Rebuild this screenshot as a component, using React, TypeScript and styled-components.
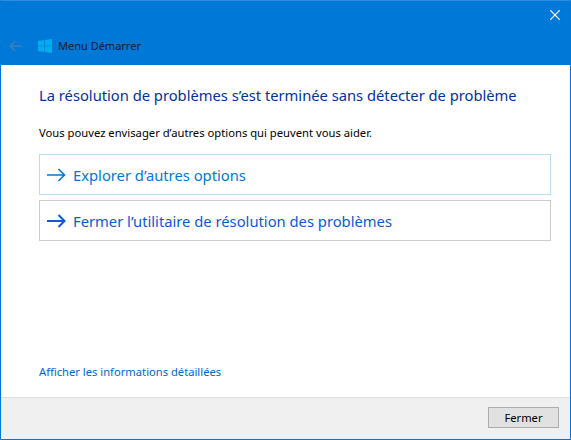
import React from "react";
import styled, { createGlobalStyle } from "styled-components";

const Global = createGlobalStyle`
  html, body { margin: 0; padding: 0; background: #fff; }
  #root { width: 571px; height: 440px; }
`;

const Win = styled.div`
  box-sizing: border-box;
  width: 571px;
  height: 440px;
  border: 1px solid #0078d7;
  border-top-color: #2b8ddb;
  display: flex;
  flex-direction: column;
  font-family: "Noto Sans", "Open Sans", sans-serif;
  overflow: hidden;
`;

const Header = styled.header`
  box-sizing: border-box;
  height: 64px;
  background: #0078d7;
  display: flex;
  flex-direction: column;
  flex: none;
`;

const CloseRow = styled.div`
  height: 36px;
  display: flex;
  justify-content: flex-end;
  align-items: flex-start;
  padding: 9px 10px 0 0;
  box-sizing: border-box;
  flex: none;
`;

const NavRow = styled.div`
  display: flex;
  align-items: center;
  height: 18px;
  padding: 0 0 0 8px;
`;

const BackIcon = styled.svg`
  margin-right: 15px;
  flex: none;
`;

const Title = styled.span`
  font-size: 11px;
  color: #0a1a33;
  margin-left: 6px;
  line-height: 18px;
`;

const Main = styled.main`
  flex: 1;
  background: #fff;
  display: flex;
  flex-direction: column;
  padding: 18px 19px 0 38px;
  min-height: 0;
`;

const Heading = styled.h1`
  margin: 0;
  font-size: 14.72px;
  font-weight: 400;
  color: #003399;
  line-height: 24px;
  white-space: nowrap;
`;

const Lead = styled.p`
  margin: 18px 0 0;
  font-size: 11.24px;
  line-height: 16px;
  color: #000;
  white-space: nowrap;
`;

const Options = styled.div`
  display: flex;
  flex-direction: column;
  gap: 5px;
  margin-top: 13px;
`;

const Option = styled.a<{ $active?: boolean }>`
  box-sizing: border-box;
  height: 41px;
  display: flex;
  align-items: center;
  gap: 7px;
  padding-left: 7px;
  border: 1px solid ${(p) => (p.$active ? "#bcdcf4" : "#cccccc")};
  color: ${(p) => (p.$active ? "#0078d7" : "#0a5ad7")};
  font-size: 14.75px;
  white-space: nowrap;
`;

const Spacer = styled.div`
  flex: 1;
`;

const DetailLink = styled.a`
  font-size: 11.2px;
  line-height: 16px;
  color: #0066cc;
  margin-bottom: 17px;
  white-space: nowrap;
`;

const Footer = styled.footer`
  box-sizing: border-box;
  height: 42px;
  flex: none;
  background: #f0f0f0;
  border-top: 1px solid #dfdfdf;
  display: flex;
  justify-content: flex-end;
  align-items: flex-start;
  padding: 9px 11px 0 0;
`;

const CloseButton = styled.button`
  box-sizing: border-box;
  width: 71px;
  height: 21px;
  padding: 0;
  background: #e1e1e1;
  border: 1px solid #adadad;
  font-family: inherit;
  font-size: 11.2px;
  line-height: 17px;
  color: #000;
`;

const ArrowIcon = styled.svg`
  flex: none;
`;

const Arrow = ({ color, weight }: { color: string; weight: number }) => (
  <ArrowIcon width="19" height="14" viewBox="0 0 19 14" fill="none" stroke={color} strokeWidth={weight}>
    <path d="M0 7H17.5M11.5 1L17.5 7L11.5 13" />
  </ArrowIcon>
);

export default function App() {
  return (
    <>
      <Global />
      <Win>
        <Header>
          <CloseRow>
            <svg width="10" height="10" viewBox="0 0 10 10" stroke="#fff" strokeWidth="1.2" fill="none">
              <path d="M0.3 0.3L9.7 9.7M9.7 0.3L0.3 9.7" />
            </svg>
          </CloseRow>
          <NavRow>
            <BackIcon width="14" height="12" viewBox="0 0 14 12" fill="none" stroke="#3f7fb8" strokeWidth="1.4">
              <path d="M13 6H1.2M6.2 1L1.2 6L6.2 11" />
            </BackIcon>
            <svg width="14" height="14" viewBox="0 0 14 14" fill="#00adef">
              <path d="M0 2L6.2 1.1V6.7H0ZM7 1L14 0V6.7H7ZM0 7.3H6.2V12.9L0 12ZM7 7.3H14V14L7 13Z" />
            </svg>
            <Title>Menu Démarrer</Title>
          </NavRow>
        </Header>
        <Main>
          <Heading>La résolution de problèmes s’est terminée sans détecter de problème</Heading>
          <Lead>Vous pouvez envisager d’autres options qui peuvent vous aider.</Lead>
          <Options>
            <Option $active>
              <Arrow color="#0078d7" weight={1.6} />
              Explorer d’autres options
            </Option>
            <Option>
              <Arrow color="#0a5ae0" weight={2} />
              Fermer l’utilitaire de résolution des problèmes
            </Option>
          </Options>
          <Spacer />
          <DetailLink>Afficher les informations détaillées</DetailLink>
        </Main>
        <Footer>
          <CloseButton>Fermer</CloseButton>
        </Footer>
      </Win>
    </>
  );
}
